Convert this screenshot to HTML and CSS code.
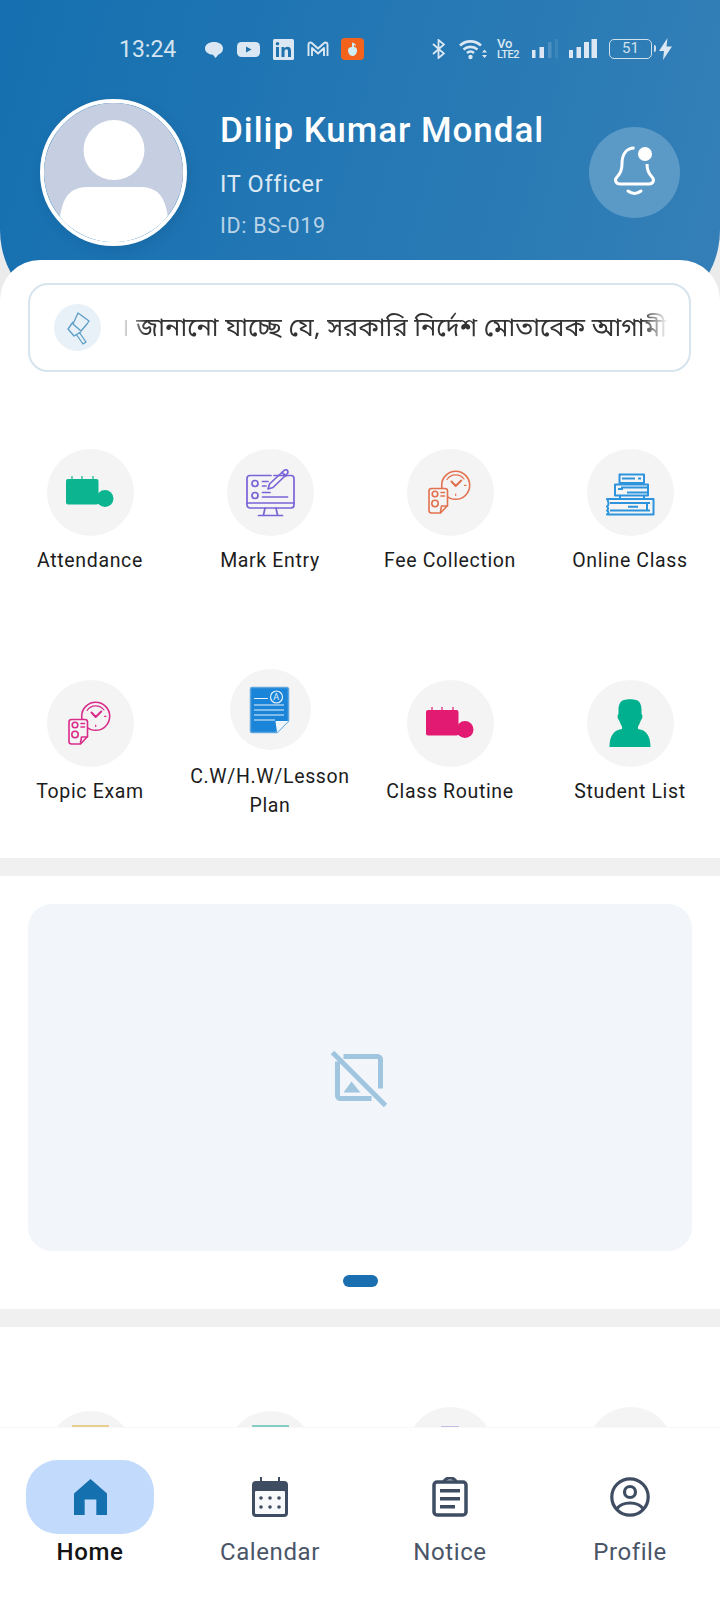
FILE: index.html
```html
<!DOCTYPE html>
<html lang="en">

<head>
    <meta charset="UTF-8">
    <meta name="viewport" content="width=device-width, initial-scale=1.0">
    <title>Home</title>
    <link rel="stylesheet" href="styles.css">
</head>

<body>
    <svg class="defs" width="0" height="0">
        <symbol id="cal-blob" viewBox="0 0 60 60">
            <path d="M12 14v4M22 14v4M33 14v4" stroke="currentColor" stroke-width="1.2" />
            <rect x="6" y="17" width="32.500" height="25.500" rx="2" fill="currentColor" />
            <rect x="30" y="32" width="10" height="10" fill="currentColor" />
            <circle cx="45" cy="36.500" r="8.500" fill="currentColor" />
        </symbol>
        <symbol id="clock-sheet" viewBox="0 0 60 60">
            <g fill="none" stroke="currentColor" stroke-width="1.600" stroke-linecap="round" stroke-linejoin="round">
                <circle cx="35.700" cy="23.300" r="14" />
                <path d="M27 17.500a10.500 10.500 0 0 1 17-.5M46 23.300h-1.500M35.700 33.500v-1.500" stroke-width="1.200" />
                <path d="M31.500 19.500l4.200 4.500 5.500-5.500" stroke-width="2" />
                <path d="M11.500 26.500h13.500a2.500 2.500 0 0 1 2.500 2.500v14.500l-7 7.500h-9a2.500 2.500 0 0 1-2.500-2.500v-19.500a2.500 2.500 0 0 1 2.500-2.500z" fill="#f4f4f4" />
                <circle cx="15" cy="32" r="2.800" />
                <circle cx="15" cy="41.500" r="3.200" />
                <path d="M21 30.500h3.500M21 34h3.500M20.500 50l1-6h6" />
            </g>
        </symbol>
    </svg>

    <main class="main">
        <header class="top">
            <div class="status">
                <span class="time">13:24</span>
                <svg class="st bubble" viewBox="0 0 18 17"><path d="M9 1c5 0 9 2.500 9 6.500 0 3-1.800 5-4.500 6L10.500 17 8 13.800C3.500 13.500 0 11 0 7.500 0 3.500 4 1 9 1z" fill="#dbe8f3" /></svg>
                <svg class="st yt" viewBox="0 0 23 15"><rect width="23" height="15" rx="4.500" fill="#dbe8f3" /><path d="M9 4.500l5.500 3-5.500 3z" fill="#1f72ad" /></svg>
                <svg class="st li" viewBox="0 0 21 21"><rect width="21" height="21" rx="1.500" fill="#dbe8f3" /><rect x="3" y="8" width="3" height="10" fill="#1f72ad" /><circle cx="4.500" cy="4.800" r="1.800" fill="#1f72ad" /><path d="M8.500 8h2.800v1.500c.7-1 1.800-1.700 3.200-1.700 2.600 0 3.500 1.700 3.500 4.200v6h-3v-5.500c0-1.300-.4-2.200-1.600-2.200s-1.900.9-1.900 2.300v5.400h-3z" fill="#1f72ad" /></svg>
                <svg class="st gm" viewBox="0 0 22 16"><path d="M1.500 15V3.500a2 2 0 0 1 3.300-1.500L11 7.500 17.200 2a2 2 0 0 1 3.300 1.500V15M5 15V7l6 5.500L17 7v8" fill="none" stroke="#dbe8f3" stroke-width="1.900" stroke-linejoin="round" /></svg>
                <svg class="st orange" viewBox="0 0 23 22"><rect width="23" height="22" rx="4" fill="#f4631c" /><path d="M7 12c0-2 2-3 4-3V4.500l1.500.5c1.500.5 2.500 1.500 2.500 3-1-1-1.700-1-2-1v2c2 0 3 1.500 3 3.500 0 3-2 5.500-4.500 5.500S7 15 7 12z" fill="#cdeef4" /></svg>
                <svg class="st bt" viewBox="0 0 13 20"><path d="M1 5l11 9.500L6.500 19V1L12 5.500 1 15" fill="none" stroke="#dbe8f3" stroke-width="1.800" /></svg>
                <svg class="st wifi" viewBox="0 0 29 22"><g fill="none" stroke="#dbe8f3" stroke-width="2.600"><path d="M1 7.500c6-5.500 15-5.500 21 0" /><path d="M4.500 11.500c4-3.500 10-3.500 14 0" /><path d="M8 15c2-1.800 5-1.800 7 0" /></g><circle cx="11.500" cy="19" r="2.200" fill="#dbe8f3" /><path d="M23 14.500l2.500-3 2.500 3zM23 17l2.500 3 2.500-3z" fill="#dbe8f3" /></svg>
                <div class="volte"><span class="vo">Vo</span><span class="lte">LTE2</span></div>
                <svg class="st sig" viewBox="0 0 26 20"><rect x="0" y="11" width="3.500" height="8" fill="#dbe8f3" /><rect x="7.500" y="8" width="4.500" height="11" fill="#dbe8f3" /><rect x="16" y="3" width="3.500" height="16" fill="#dbe8f3" opacity=".2" /><rect x="23" y="0" width="3" height="19" fill="#dbe8f3" opacity=".1" /></svg>
                <svg class="st sig2" viewBox="0 0 28 20"><rect x="0" y="11" width="4" height="8" fill="#dbe8f3" /><rect x="7.500" y="8" width="4.500" height="11" fill="#dbe8f3" /><rect x="15" y="3" width="5" height="16" fill="#dbe8f3" /><rect x="22.500" y="0" width="5.500" height="19" fill="#dbe8f3" /></svg>
                <div class="batt"><span>51</span></div>
                <svg class="st bolt" viewBox="0 0 13 22"><path d="M8.500 0L0 13h5l-1 9 9-13.500H7.500z" fill="#dbe8f3" /></svg>
            </div>

            <div class="profile">
                <svg class="avatar" viewBox="0 0 139 139">
                    <rect width="139" height="139" fill="#c6cfe1" />
                    <ellipse cx="70" cy="47" rx="30.500" ry="30" fill="#fff" />
                    <path d="M14 140c2-30 2-55 28-56h56c26 1 26 26 28 56z" fill="#fff" />
                </svg>
                <div class="who">
                    <h1 class="name">Dilip Kumar Mondal</h1>
                    <p class="role">IT Officer</p>
                    <p class="sid">ID: BS-019</p>
                </div>
                <div class="bell">
                    <svg width="91" height="91" viewBox="0 0 91 91">
                        <path d="M45.500 21C36 21 33 29 33 37c0 7-2 10-5 13-3 3-1 7 3 7h29c4 0 6-4 3-7-3-3-5-6-5-13" fill="none" stroke="#fff" stroke-width="3" />
                        <path d="M39 64q6.500 5 13 0" fill="none" stroke="#fff" stroke-width="3" stroke-linecap="round" />
                        <circle cx="56" cy="27" r="7" fill="#fff" />
                    </svg>
                </div>
            </div>
        </header>

        <section class="card">
            <div class="notice">
                <div class="notice_icon">
                    <svg width="47" height="47" viewBox="0 0 47 47">
                        <g fill="none" stroke="#5b9dc6" stroke-width="1.300" stroke-linejoin="round">
                            <path d="M24 9l11 8-2 3-6 7-8-7z" />
                            <path d="M19 18l-5 7 6 7 7-4" />
                            <path d="M22 30l7 10 3-2-7-10" />
                        </g>
                    </svg>
                </div>
                <div class="notice_text"><span>। জানানো যাচ্ছে যে, সরকারি নির্দেশ মোতাবেক আগামী</span></div>
            </div>

            <div class="grid">
                <a class="tile" href="javascript:;">
                    <div class="dot"><svg class="ico c_green"><use href="#cal-blob" /></svg></div>
                    <span>Attendance</span>
                </a>
                <a class="tile" href="javascript:;">
                    <div class="dot">
                        <svg class="ico" viewBox="0 0 60 60">
                            <g fill="none" stroke="#7a63d6" stroke-width="1.700" stroke-linecap="round" stroke-linejoin="round">
                                <path d="M34 13.500h17a3 3 0 0 1 3 3V43a3 3 0 0 1-3 3H10a3 3 0 0 1-3-3V16.500a3 3 0 0 1 3-3h21" />
                                <path d="M7 41h47M25 46l-1.500 7M36 46l1.500 7M18.500 53.500h24" />
                                <circle cx="15" cy="21.500" r="3" />
                                <circle cx="15" cy="33.500" r="3" />
                                <path d="M22.500 19.500H28M22.500 30.500H30M22.500 35h25M22.500 24H26" />
                                <path d="M28 27l1.500-5L44 8.500c1.500-1.300 3.300-.7 3.800.5.500 1.200.200 2-.8 3L33 25.500z" />
                                <path d="M42 10.500l4 3.500" />
                            </g>
                        </svg>
                    </div>
                    <span>Mark Entry</span>
                </a>
                <a class="tile" href="javascript:;">
                    <div class="dot"><svg class="ico c_orange"><use href="#clock-sheet" /></svg></div>
                    <span>Fee Collection</span>
                </a>
                <a class="tile" href="javascript:;">
                    <div class="dot">
                        <svg class="ico" viewBox="0 0 60 60">
                            <g fill="none" stroke="#2d93dc" stroke-width="2" stroke-linejoin="round">
                                <path d="M19.500 12.500H44v8.500H19.500z" />
                                <path d="M22 16.500h13M38 16.500h3" />
                                <path d="M15 22.500h33v11H15z" />
                                <path d="M48 25.500H21M48 30.500H27M18 27h5" />
                                <path d="M20 33.500v3.500M44 33.500v3.500" />
                                <path d="M7 37h46.500v15.500H7c2-1 2-3 0-4 1.500-1 1.500-3 0-4 2-1 2-4.500 0-7.500z" />
                                <path d="M10 41h40M10 48.500h40M28 44.700h10M47 40v9" />
                            </g>
                        </svg>
                    </div>
                    <span>Online Class</span>
                </a>
                <a class="tile" href="javascript:;">
                    <div class="dot"><svg class="ico c_pink"><use href="#clock-sheet" /></svg></div>
                    <span>Topic Exam</span>
                </a>
                <a class="tile tile_two" href="javascript:;">
                    <div class="dot dot_small">
                        <svg class="ico" viewBox="0 0 60 60">
                            <path d="M12 7.500h35a1.500 1.500 0 0 1 1.500 1.500v32L37 52.500H12a1.500 1.500 0 0 1-1.500-1.500V9a1.500 1.500 0 0 1 1.500-1.500z" fill="#1a84d8" stroke="#5fa6dd" stroke-width="1.500" />
                            <path d="M14 18.500h14M14 25h30M14 30h30M14 35h30M14 40h21" stroke="#e7f2fb" stroke-width="1.200" />
                            <circle cx="36.500" cy="17" r="6" fill="#1a84d8" stroke="#e7f2fb" stroke-width="1.200" />
                            <text class="grade" x="36.500" y="20">A</text>
                            <path d="M35.500 41h13L37 52.500z" fill="#eef5fb" />
                        </svg>
                    </div>
                    <span>C.W/H.W/Lesson Plan</span>
                </a>
                <a class="tile" href="javascript:;">
                    <div class="dot"><svg class="ico c_rose"><use href="#cal-blob" /></svg></div>
                    <span>Class Routine</span>
                </a>
                <a class="tile" href="javascript:;">
                    <div class="dot">
                        <svg class="ico" viewBox="0 0 60 60">
                            <path d="M24 7C27 6 33 6 36 7 40 8 41.500 12 41.500 17V21C43 22 42.500 26 41 27 40 30 39 32 38 33.500V36C47 37 50.500 44 50.500 54H9.500C9.500 44 13 37 22 36V33.500C21 32 20 30 19 27 17.500 26 17 22 18.500 21V17C18.500 12 20 8 24 7z" fill="#00b08e" />
                        </svg>
                    </div>
                    <span>Student List</span>
                </a>
            </div>

            <div class="sep"></div>

            <div class="banner">
                <svg width="60" height="60" viewBox="1.500 0.500 60 60">
                    <g fill="none" stroke="#a0c5df" stroke-width="5">
                        <path d="M15 9h34a3 3 0 0 1 3 3v29" />
                        <path d="M9 14v34a3 3 0 0 0 3 3h31" />
                        <path d="M4 5l53 53" />
                    </g>
                    <path d="M15 45l8-11 9 11z" fill="#a0c5df" />
                </svg>
            </div>
            <div class="pager"><i></i></div>

            <div class="sep"></div>

            <div class="more">
                <div class="dot"><i class="stub stub_tan"></i></div>
                <div class="dot"><i class="stub stub_teal"></i></div>
                <div class="dot dot_up"><i class="stub stub_violet"></i></div>
                <div class="dot dot_up"></div>
            </div>
        </section>
    </main>

    <nav class="nav">
        <a class="nav_item active" href="javascript:;">
            <div class="pill">
                <svg width="33" height="36" viewBox="0 0 34 37"><path d="M17 0L34 15v22H23V21H11v16H0V15z" fill="#1570b0" /></svg>
            </div>
            <span>Home</span>
        </a>
        <a class="nav_item" href="javascript:;">
            <div class="pill">
                <svg width="36" height="40" viewBox="0 0 36 40">
                    <path d="M8 0h2v4h16V0h2v4h4a4 4 0 0 1 4 4v28a4 4 0 0 1-4 4H4a4 4 0 0 1-4-4V8a4 4 0 0 1 4-4h4z" fill="#3f4d63" />
                    <rect x="3" y="14" width="30" height="23" rx="1" fill="#f7f9fb" />
                    <g fill="#3f4d63"><circle cx="9" cy="21" r="1.800" /><circle cx="18" cy="21" r="1.800" /><circle cx="27" cy="21" r="1.800" /><circle cx="9" cy="30" r="1.800" /><circle cx="18" cy="30" r="1.800" /><circle cx="27" cy="30" r="1.800" /></g>
                </svg>
            </div>
            <span>Calendar</span>
        </a>
        <a class="nav_item" href="javascript:;">
            <div class="pill">
                <svg width="36" height="40" viewBox="0 0 36 40">
                    <rect x="2" y="5" width="32" height="33" rx="3" fill="none" stroke="#3f4d63" stroke-width="3.500" />
                    <path d="M12 5a6 4 0 0 1 12 0" fill="none" stroke="#3f4d63" stroke-width="3" />
                    <rect x="8" y="12" width="20" height="3.500" fill="#3f4d63" />
                    <rect x="8" y="20" width="20" height="3.500" fill="#3f4d63" />
                    <rect x="8" y="28" width="15" height="3.500" fill="#3f4d63" />
                </svg>
            </div>
            <span>Notice</span>
        </a>
        <a class="nav_item" href="javascript:;">
            <div class="pill">
                <svg width="40" height="40" viewBox="0 0 40 40">
                    <g fill="none" stroke="#3f4d63" stroke-width="3.200">
                        <circle cx="20" cy="20" r="18.200" />
                        <circle cx="20" cy="15" r="5.500" />
                        <path d="M6.500 32c3-4 8-6 13.500-6s10.500 2 13.500 6" />
                    </g>
                </svg>
            </div>
            <span>Profile</span>
        </a>
    </nav>
</body>

</html>
```

FILE: styles.css
```css
* {
    margin: 0;
    padding: 0;
    box-sizing: border-box;
}

body {
    width: 720px;
    height: 1600px;
    overflow: hidden;
    display: flex;
    flex-direction: column;
    background: #ebebeb;
    font-family: Roboto, "Noto Sans", "Noto Sans CJK SC", sans-serif;
}

a {
    text-decoration: none;
}

.defs {
    position: absolute;
}

.main {
    height: 1428px;
    overflow: hidden;
}

/* header */
.top {
    height: 320px;
    padding-top: 37px;
    border-radius: 0 0 90px 90px;
    background: linear-gradient(105deg, #156fb0 0%, #2a7bb5 70%, #357fb8 100%);
}

.status {
    display: flex;
    align-items: center;
    height: 24px;
    padding-left: 119px;
}

.time {
    width: 57px;
    font-size: 23px;
    color: #d3e3f0;
}

.st {
    display: block;
    flex: none;
}

.bubble {
    width: 18px;
    height: 17px;
    margin-left: 29px;
}

.yt {
    width: 23px;
    height: 15px;
    margin-left: 14px;
}

.li {
    width: 21px;
    height: 21px;
    margin-left: 13px;
}

.gm {
    width: 22px;
    height: 16px;
    margin-left: 13px;
}

.orange {
    width: 23px;
    height: 22px;
    margin-left: 12px;
}

.bt {
    width: 13px;
    height: 20px;
    margin-left: 68px;
}

.wifi {
    width: 29px;
    height: 22px;
    margin-left: 14px;
}

.volte {
    width: 24px;
    margin-left: 9px;
    display: flex;
    flex-direction: column;
    font-weight: 500;
    color: #dbe8f3;
}

.vo {
    font-size: 13px;
    line-height: 11px;
}

.lte {
    font-size: 11px;
    line-height: 11px;
    letter-spacing: -.4px;
}

.sig {
    width: 26px;
    height: 20px;
    margin-left: 11px;
}

.sig2 {
    width: 28px;
    height: 20px;
    margin-left: 11px;
}

.batt {
    position: relative;
    width: 43px;
    height: 20px;
    margin-left: 12px;
    border: 1.5px solid #cfe0ee;
    border-radius: 5px;
    text-align: center;
    font-size: 15px;
    line-height: 17px;
    color: #cfe0ee;
}

.batt::after {
    content: "";
    position: absolute;
    right: -5px;
    top: 5px;
    width: 2px;
    height: 7px;
    border-radius: 0 2px 2px 0;
    background: #cfe0ee;
}

.bolt {
    width: 13px;
    height: 22px;
    margin-left: 7px;
}

.profile {
    display: flex;
    align-items: center;
    margin-top: 38px;
    padding: 0 40px;
}

.avatar {
    display: block;
    flex: none;
    width: 147px;
    height: 147px;
    border: 4px solid #fff;
    border-radius: 50%;
    box-shadow: 3px 5px 12px rgba(10, 60, 100, .15);
}

.who {
    margin-left: 33px;
    padding-top: 4px;
    color: #fff;
}

.name {
    font-size: 35px;
    line-height: 40px;
    font-weight: 500;
    letter-spacing: .95px;
}

.role {
    margin-top: 19px;
    font-size: 23.500px;
    line-height: 28px;
    letter-spacing: .7px;
    color: #dce9f4;
}

.sid {
    margin-top: 15px;
    font-size: 21.500px;
    line-height: 26px;
    letter-spacing: .7px;
    color: #b9d3e7;
}

.bell {
    width: 91px;
    height: 91px;
    margin-left: auto;
    border-radius: 50%;
    background: #5b9ac7;
}

/* card */
.card {
    margin-top: -60px;
    padding-top: 23px;
    border-radius: 40px 40px 0 0;
    background: #fff;
}

.notice {
    display: flex;
    align-items: center;
    height: 89px;
    margin: 0 29px 0 28px;
    padding: 0 16px 0 24px;
    border: 2px solid #d6e4ee;
    border-radius: 20px;
}

.notice_icon {
    flex: none;
    width: 47px;
    height: 47px;
    border-radius: 50%;
    background: #e8f1f8;
}

.notice_text {
    flex: 1;
    margin-left: 19px;
    overflow: hidden;
    white-space: nowrap;
    font-family: "Noto Sans", "Noto Sans Bengali", sans-serif;
    font-size: 25.500px;
    color: #333;
    -webkit-mask-image: linear-gradient(90deg, transparent 0, #000 26px, #000 522px, transparent 548px);
    mask-image: linear-gradient(90deg, transparent 0, #000 26px, #000 522px, transparent 548px);
}

.grid {
    display: grid;
    grid-template-columns: repeat(4, 180px);
    grid-auto-rows: 231px;
    align-items: center;
    margin-top: 24px;
}

.tile {
    display: flex;
    flex-direction: column;
    align-items: center;
    text-align: center;
    font-size: 19.500px;
    line-height: 28px;
    letter-spacing: .65px;
    color: #1c1c1c;
}

.tile span {
    display: block;
    width: 176px;
    margin-top: 11px;
}

.tile_two {
    padding-top: 4px;
    line-height: 28.500px;
}

.tile_two span {
    margin-top: 13px;
}

.grade {
    font-size: 9px;
    text-anchor: middle;
    fill: #e7f2fb;
}

.dot {
    flex: none;
    width: 87px;
    height: 87px;
    display: flex;
    align-items: center;
    justify-content: center;
    border-radius: 50%;
    background: #f4f4f4;
}

.dot_small {
    width: 81px;
    height: 81px;
}

.ico {
    display: block;
    width: 60px;
    height: 60px;
}

.c_green {
    color: #0cb58f;
}

.c_rose {
    color: #e21a72;
}

.c_orange {
    color: #e2714f;
}

.c_pink {
    color: #d92c8a;
}

.sep {
    height: 18px;
    background: #f0f0f0;
}

.banner {
    display: flex;
    align-items: center;
    justify-content: center;
    height: 347px;
    margin: 28px 28px 0;
    border-radius: 24px;
    background: #f2f6fa;
}

.pager {
    display: flex;
    justify-content: center;
    padding: 24px 0 22px;
}

.pager i {
    width: 35px;
    height: 12px;
    border-radius: 6px;
    background: #1a6fb0;
}

.more {
    display: grid;
    grid-template-columns: repeat(4, 180px);
    justify-items: center;
    align-items: start;
    padding-top: 84px;
}

.more .dot {
    align-items: flex-start;
    padding-top: 14px;
}

.more .dot_up {
    margin-top: -4px;
    padding-top: 19px;
}

.stub {
    display: block;
    width: 37px;
    height: 12px;
}

.stub_tan {
    background: #e8cd90;
}

.stub_teal {
    background: #86cdc3;
}

.stub_violet {
    width: 18px;
    background: #c5bde6;
}

/* bottom nav */
.nav {
    flex: 1;
    display: grid;
    grid-template-columns: repeat(4, 180px);
    padding-top: 32px;
    box-shadow: 0 -1px 0 #f8f8f8;
    background: #fff;
}

.nav_item {
    display: flex;
    flex-direction: column;
    align-items: center;
    font-size: 24px;
    line-height: 30px;
    letter-spacing: .6px;
    color: #4a5568;
}

.nav_item span {
    margin-top: 3px;
}

.pill {
    display: flex;
    align-items: center;
    justify-content: center;
    width: 128px;
    height: 74px;
    border-radius: 32px;
}

.active {
    font-weight: 500;
    color: #141414;
}

.active .pill {
    background: #c2dafb;
}
```
